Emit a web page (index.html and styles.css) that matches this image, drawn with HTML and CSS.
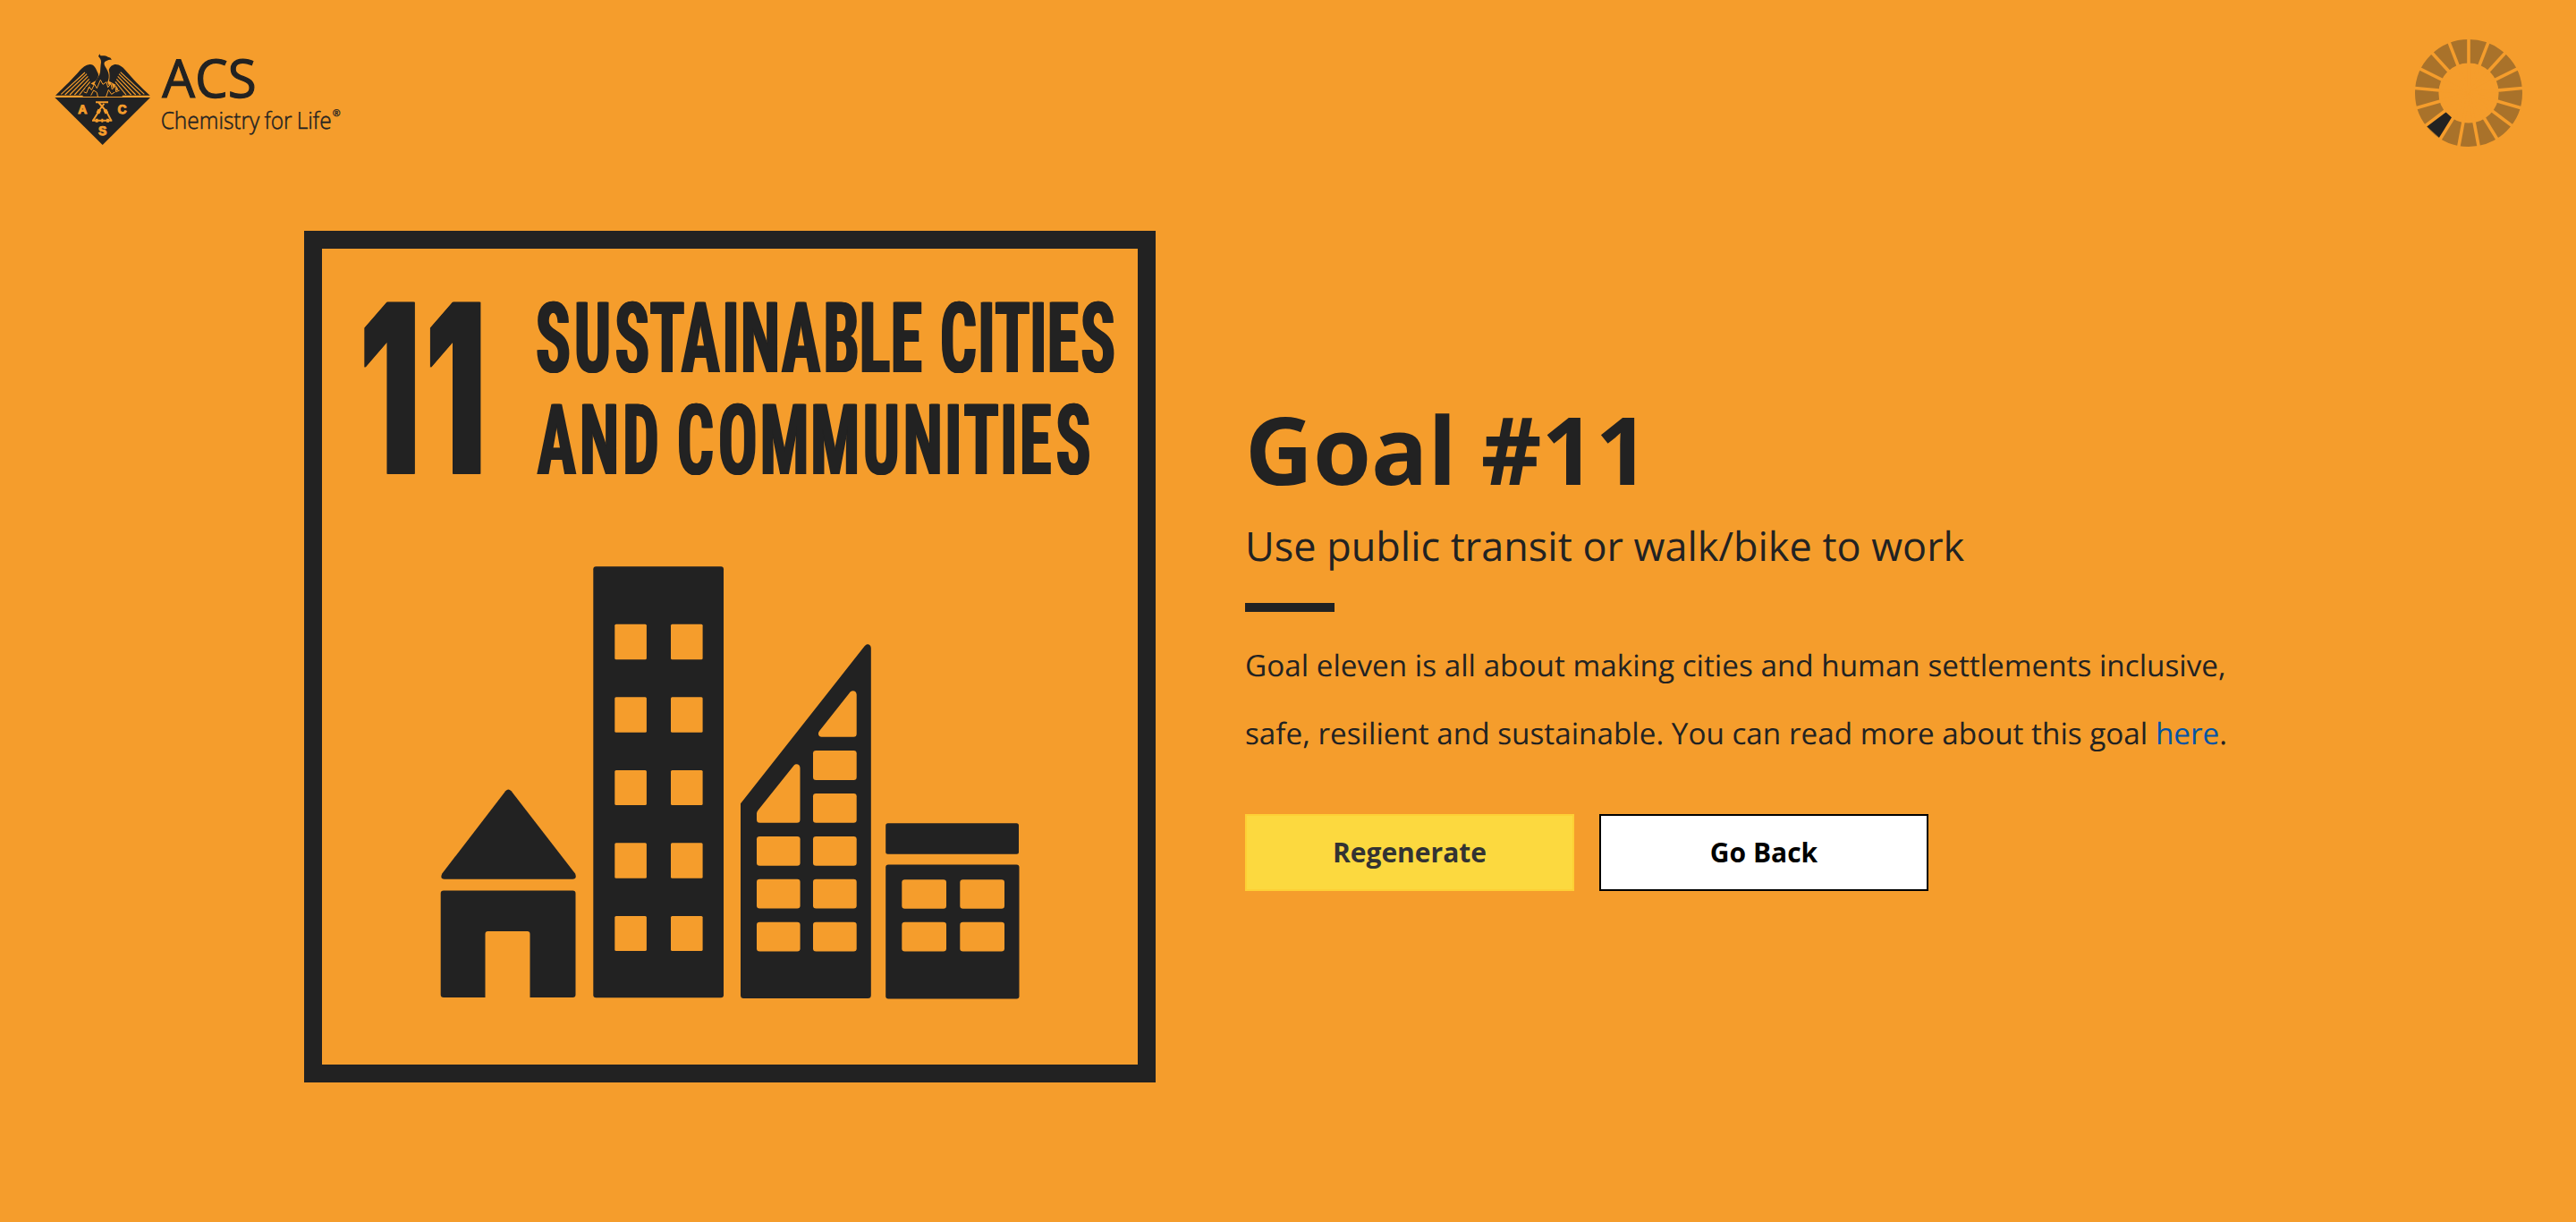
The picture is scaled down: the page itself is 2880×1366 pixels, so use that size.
FILE: index.html
```
<!DOCTYPE html>
<html lang="en">
<head>
<meta charset="utf-8">
<title>Goal #11</title>
<link rel="stylesheet" href="styles.css">
</head>
<body>
<header class="header">
  <svg class="logo" viewBox="0 0 1050 360" role="img" aria-label="ACS Chemistry for Life">
    <!-- eagle -->
    <path class="ink" d="M180 39L184 31L187 37C196 37 206 36 212 41C219 42 224 45 224 52C220 49 214 51 209 53C201 55 198 60 200 67C203 76 214 88 215 102C216 113 213 122 208 130L199 143L174 143L172 121C176 112 184 103 186 92C187 82 187 70 189 59C190 50 184 44 180 39Z"/>
    <path class="ink" d="M177 92C172 81 166 65 151 66C137 68 127 76 119 85C98 110 67 141 36 170L132 170L155 130L171 121C179 112 182 102 179 96Z"/>
    <path class="ink" d="M215 84C219 73 228 66 238 66C252 67 261 74 270 85C292 111 323 144 353 170L258 170L238 134L216 122C218 111 219 98 215 84Z"/>
    <path class="cut" d="M135 93L55 166M141 98L68 168M145 106L84 168M149 115L100 168M152 124L116 168M254 92L334 166M249 98L321 168M245 106L305 168M241 115L290 168M237 124L273 168"/>
    <!-- flames -->
    <path class="ink" d="M128 174L126 156L135 161L138 140L149 148L153 130L165 136L173 118L180 131L188 114L199 128L209 122L215 136L225 129L228 145L239 134L241 154L252 149L253 159L261 155L260 174Z"/>
    <path class="cut thin" d="M131 158L140 162L149 141L157 152L167 132L175 146L187 118L195 133L207 125L212 143L222 131L226 150L237 138L239 158L251 153M155 170L164 153L175 160L178 174M206 174L214 151L224 166L235 159"/>
    <path class="ink" d="M34 177H354L194 336Z"/>
    <!-- flask apparatus -->
    <path class="cut flask" d="M171 193H213M181 194L205 222M199 198L181 222M181 224L162 254M206 222L223 254M159 254H226"/>
    <path class="cut knob" d="M184 218L178 230M202 218L208 230M170 254H179M190 254H196M207 254H216"/>
    <text class="seal" x="127" y="231">A</text>
    <text class="seal" x="260" y="231">C</text>
    <text class="seal" x="194" y="304">S</text>
    <text class="name" x="394" y="177" textLength="316" lengthAdjust="spacingAndGlyphs">ACS</text>
    <text class="tagline" x="389" y="281" textLength="573" lengthAdjust="spacingAndGlyphs">Chemistry for Life</text>
    <text class="reg" x="965" y="240">®</text>
  </svg>
  <svg class="wheel" viewBox="-60 -60 120 120" aria-hidden="true">
    <circle class="ring" r="46.8"/>
    <path class="ink" d="M-17.71 28.6L-31.6 51L-47.86 36.2L-26.8 20.2Z"/>
    <g class="spokes">
      <path d="M0 0V-62"/><path d="M0 0V-62" transform="rotate(21.18)"/>
      <path d="M0 0V-62" transform="rotate(42.35)"/><path d="M0 0V-62" transform="rotate(63.53)"/>
      <path d="M0 0V-62" transform="rotate(84.71)"/><path d="M0 0V-62" transform="rotate(105.88)"/>
      <path d="M0 0V-62" transform="rotate(127.06)"/><path d="M0 0V-62" transform="rotate(148.24)"/>
      <path d="M0 0V-62" transform="rotate(169.41)"/><path d="M0 0V-62" transform="rotate(190.59)"/>
      <path d="M0 0V-62" transform="rotate(211.76)"/><path d="M0 0V-62" transform="rotate(232.94)"/>
      <path d="M0 0V-62" transform="rotate(254.12)"/><path d="M0 0V-62" transform="rotate(275.29)"/>
      <path d="M0 0V-62" transform="rotate(296.47)"/><path d="M0 0V-62" transform="rotate(317.65)"/>
      <path d="M0 0V-62" transform="rotate(338.82)"/>
    </g>
  </svg>
</header>
<main class="goal">
  <svg class="poster" viewBox="340 258 952 952" role="img" aria-label="11 Sustainable cities and communities">
    <rect class="frame" x="350" y="268" width="932" height="932"/>
    <text class="number" transform="translate(399 529.7) scale(.58 1)" x="63.5 190.3">11</text>
    <g class="title">
      <text transform="translate(600 415.5) scale(.66 1)" x="28 94.7 161.9 221.2 277.6 328.8 378.7 447.8 516.2 572.7 626.2 669.7 714.4 762.1 805.8 849.7 891.3 950.8">SUSTAINABLE CITIES</text>
      <text transform="translate(600 529.5) scale(.66 1)" x="33.8 106 176.5 221.5 268.9 340.6 419.7 505.6 583.7 654.2 705.8 753.1 799.7 845 909.1">AND COMMUNITIES</text>
    </g>
    <!-- house -->
    <path class="ink" d="M565.2 884.2Q568.3 880.8 571.6 884.2L643 976.5Q645.5 982.7 640 982.7H497Q491.5 982.7 494.3 976.5Z"/>
    <path class="ink" d="M496 995.5H640.3Q643.5 995.5 643.5 998.7V1111.8Q643.5 1115 640.3 1115H592.5V1044Q592.5 1041 589.5 1041H545.5Q542.5 1041 542.5 1044V1115H496Q492.7 1115 492.7 1111.8V998.7Q492.7 995.5 496 995.5Z"/>
    <!-- tower -->
    <rect class="ink" x="663.3" y="633.3" width="145.7" height="482" rx="3"/>
    <g class="pane">
      <rect x="687.3" y="697.8" width="35.6" height="39.4" rx="1.5"/><rect x="750" y="697.8" width="35.6" height="39.4" rx="1.5"/>
      <rect x="687.3" y="779.3" width="35.6" height="39.4" rx="1.5"/><rect x="750" y="779.3" width="35.6" height="39.4" rx="1.5"/>
      <rect x="687.3" y="861" width="35.6" height="39" rx="1.5"/><rect x="750" y="861" width="35.6" height="39" rx="1.5"/>
      <rect x="687.3" y="942.3" width="35.6" height="39.4" rx="1.5"/><rect x="750" y="942.3" width="35.6" height="39.4" rx="1.5"/>
      <rect x="687.3" y="1024" width="35.6" height="39" rx="1.5"/><rect x="750" y="1024" width="35.6" height="39" rx="1.5"/>
    </g>
    <!-- slanted block -->
    <path class="ink" d="M828 898.3L966.6 722.3C969.4 718.6 973.8 720.2 973.8 724.5V1112.5Q973.8 1116 970.3 1116H831.5Q828 1116 828 1112.5Z"/>
    <g class="pane">
      <path d="M950.8 773.3C953.3 771 957.7 772.3 957.7 776.5V820.2Q957.7 823.7 954.2 823.7H918.5C914.8 823.7 914 819.5 916.2 817Z"/>
      <path d="M887.5 855.7C890 853 894.5 854 894.5 858.5V916.3Q894.5 919.8 891 919.8H849.5Q846 919.8 846 916.3V909.5Q846 907.5 847.3 906Z"/>
      <rect x="909" y="839" width="48.7" height="33" rx="3.3"/><rect x="909" y="887" width="48.7" height="32.8" rx="3.3"/>
      <rect x="846" y="935" width="48.6" height="32.8" rx="3.3"/><rect x="909" y="935" width="48.7" height="32.8" rx="3.3"/>
      <rect x="846" y="982.7" width="48.6" height="32.9" rx="3.3"/><rect x="909" y="982.7" width="48.7" height="32.9" rx="3.3"/>
      <rect x="846" y="1030.7" width="48.6" height="32.9" rx="3.3"/><rect x="909" y="1030.7" width="48.7" height="32.9" rx="3.3"/>
    </g>
    <!-- shop -->
    <rect class="ink" x="990.2" y="920.2" width="148.8" height="34.6" rx="2.5"/>
    <rect class="ink" x="990.2" y="966.4" width="149.3" height="150" rx="3"/>
    <g class="pane">
      <rect x="1008.3" y="983.2" width="49.7" height="32.5" rx="3.3"/><rect x="1073.3" y="983.2" width="49.7" height="32.5" rx="3.3"/>
      <rect x="1008.3" y="1030.7" width="49.7" height="32.9" rx="3.3"/><rect x="1073.3" y="1030.7" width="49.7" height="32.9" rx="3.3"/>
    </g>
  </svg>
  <section class="details">
    <h1 class="heading">Goal #11</h1>
    <h2 class="subtitle">Use public transit or walk/bike to work</h2>
    <div class="rule"></div>
    <p class="copy">Goal eleven is all about making cities and human settlements inclusive,<br>safe, resilient and sustainable. You can read more about this goal <a class="link" href="#">here</a>.</p>
    <div class="actions">
      <button class="button primary">Regenerate</button>
      <button class="button secondary">Go Back</button>
    </div>
  </section>
</main>
</body>
</html>
```
FILE: styles.css
```
:root { --orange: #f59d2c; --ink: #222; }
* { box-sizing: border-box; }
body {
  margin: 0;
  min-height: 1366px;
  background: var(--orange);
  color: var(--ink);
  font-family: "Open Sans", sans-serif;
  text-rendering: geometricPrecision;
}
.header {
  display: flex;
  justify-content: space-between;
  align-items: flex-start;
  height: 258px;
  padding: 44px 60px 0 50px;
}
.logo { width: 350px; height: 120px; margin-top: 6px; }
.wheel { width: 120px; height: 120px; }
.ink { fill: var(--ink); }
.cut { fill: none; stroke: var(--orange); stroke-width: 3.5; stroke-linejoin: miter; }
.cut.thin { stroke-width: 3; }
.cut.flask { stroke-width: 6; }
.cut.knob { stroke-width: 12; }
.seal { fill: var(--orange); font: 700 42px "Liberation Sans", sans-serif; text-anchor: middle; stroke: var(--orange); stroke-width: 3; }
.name { fill: var(--ink); font: 400 178px "Open Sans", sans-serif; stroke: var(--ink); stroke-width: 3.5; }
.tagline { fill: var(--ink); font: 300 79px "Open Sans", sans-serif; word-spacing: -4px; stroke: var(--ink); stroke-width: 1.5; }
.reg { fill: var(--ink); font: 400 32px "Open Sans", sans-serif; stroke: var(--ink); stroke-width: 1; }
.ring { fill: none; stroke: #a9722a; stroke-width: 26.4; }
.spokes { stroke: var(--orange); stroke-width: 3.6; }
.goal { display: flex; align-items: flex-start; gap: 100px; padding-left: 340px; }
.poster { width: 952px; height: 952px; flex: none; }
.frame { fill: none; stroke: var(--ink); stroke-width: 20; }
.pane { fill: var(--orange); }
.title { fill: var(--ink); font: 700 110px Roboto, sans-serif; font-stretch: 75%; text-anchor: middle; text-shadow: 1.6px 0 0 var(--ink), -1.6px 0 0 var(--ink); }
.number { fill: var(--ink); font: 900 264px Inter, sans-serif; text-anchor: middle; text-shadow: 1px 0 0 var(--ink), -1px 0 0 var(--ink); }
.details { padding-top: 184px; }
.heading { margin: 0; font-size: 105px; line-height: 120px; font-weight: 700; white-space: nowrap; }
.subtitle { margin: 19px 0 0; font-size: 45px; line-height: 60px; font-weight: 400; white-space: nowrap; }
.rule { width: 100px; height: 10px; margin-top: 33px; background: var(--ink); }
.copy { margin: 21px 0 0; font-size: 33.28px; line-height: 76px; white-space: nowrap; }
.link { color: #0054a6; text-decoration: none; }
.actions { display: flex; gap: 28px; margin-top: 53px; }
.button { width: 368px; height: 86px; padding: 0 0 2px; font: 700 30px "Open Sans", sans-serif; border: 2px solid; border-radius: 0; }
.primary { background: #fcd93f; border-color: #fdd035; color: #333; }
.secondary { background: #fff; border-color: #000; color: #000; }
```
